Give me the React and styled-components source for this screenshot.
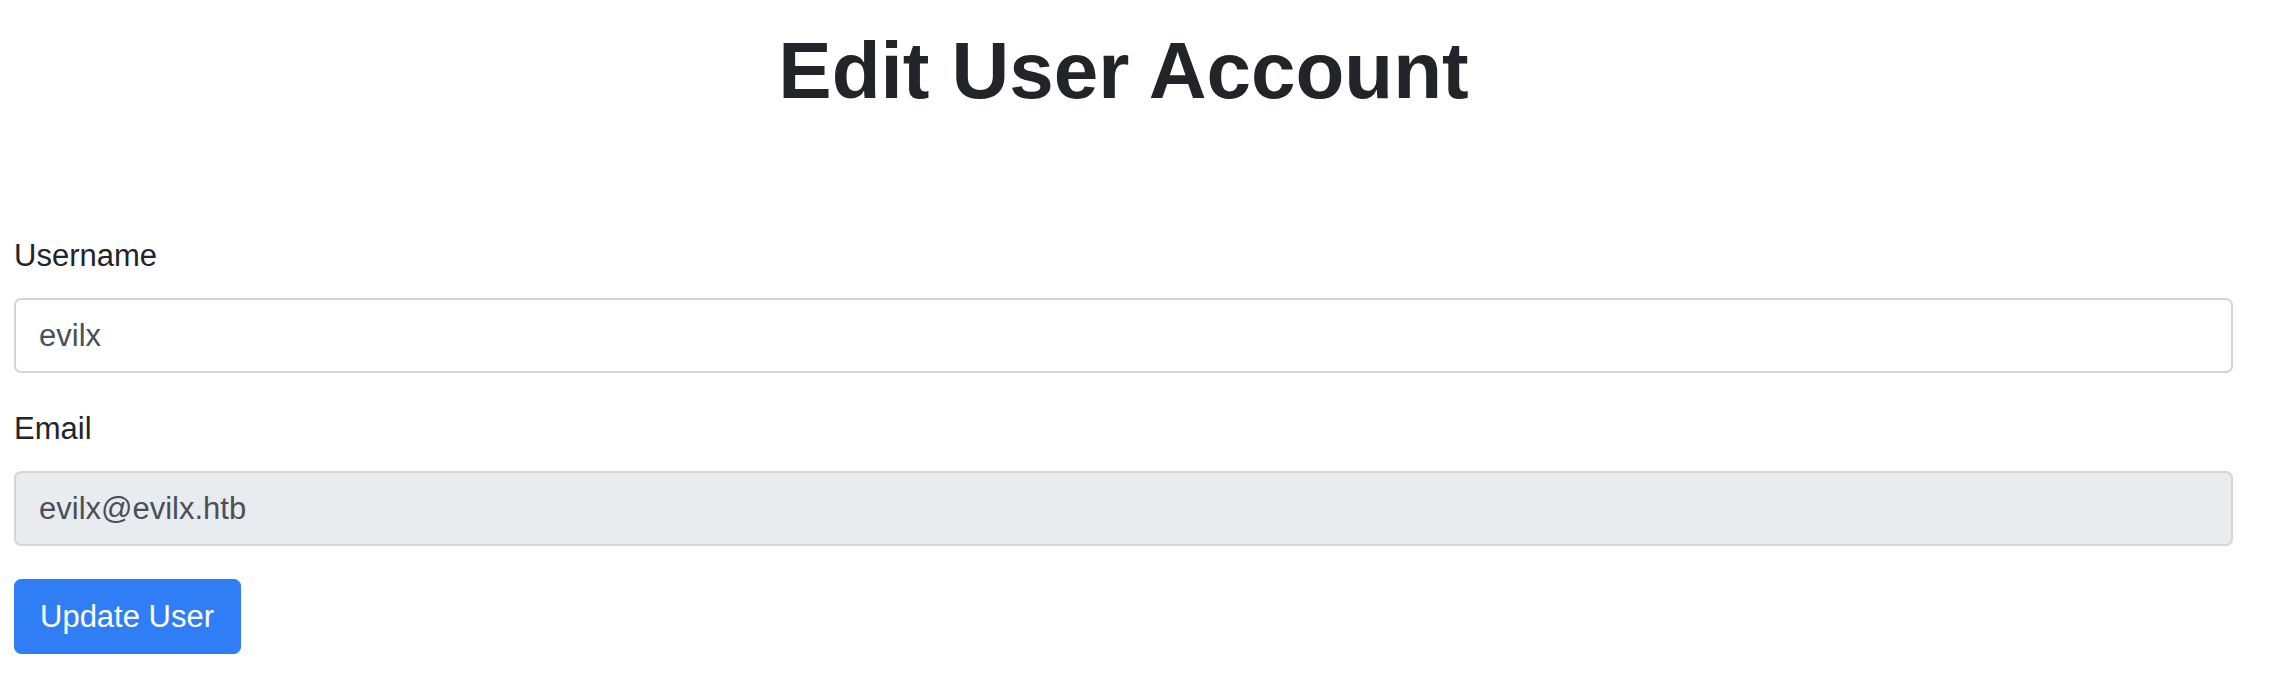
import React from 'react'
import styled, { createGlobalStyle } from 'styled-components'

const GlobalStyle = createGlobalStyle`
  html, body {
    margin: 0;
    padding: 0;
    background: #ffffff;
  }
  body {
    font-family: "Liberation Sans", Arial, sans-serif;
    color: #212529;
  }
`;

const Page = styled.div`
  display: flex;
  flex-direction: column;
  padding: 23px 39px 0 14px;
`;

const Title = styled.h1`
  margin: 0 0 114px 0;
  font-size: 80px;
  line-height: 96px;
  font-weight: 700;
  text-align: center;
  color: #212529;
`;

const Form = styled.form`
  display: flex;
  flex-direction: column;
  align-items: stretch;
`;

const FieldGroup = styled.div`
  display: flex;
  flex-direction: column;
  margin-bottom: 33px;
`;

const Label = styled.label`
  font-size: 31px;
  line-height: 46px;
  margin-bottom: 19px;
  color: #212529;
`;

const Input = styled.input`
  box-sizing: border-box;
  height: 75px;
  width: 100%;
  padding: 0 23px;
  font-family: "Liberation Sans", Arial, sans-serif;
  font-size: 31px;
  color: #495057;
  background: ${p => (p.disabled ? '#e9ecef' : '#ffffff')};
  border: 2px solid #d1d5da;
  border-radius: 7px;
  outline: none;
  -webkit-text-fill-color: #495057;
  opacity: 1;
`;

const Button = styled.button`
  align-self: flex-start;
  box-sizing: border-box;
  height: 75px;
  padding: 0 26px 0 25px;
  font-family: "Liberation Sans", Arial, sans-serif;
  font-size: 31px;
  color: #ffffff;
  background: #307ef6;
  border: 1px solid #307ef6;
  border-radius: 7px;
  cursor: pointer;
`;

function App() {
  return (
    <>
      <GlobalStyle />
      <Page>
        <Title>Edit User Account</Title>
        <Form onSubmit={e => e.preventDefault()}>
          <FieldGroup>
            <Label htmlFor="username">Username</Label>
            <Input id="username" defaultValue="evilx" />
          </FieldGroup>
          <FieldGroup>
            <Label htmlFor="email">Email</Label>
            <Input id="email" defaultValue="evilx@evilx.htb" disabled />
          </FieldGroup>
          <Button type="submit">Update User</Button>
        </Form>
      </Page>
    </>
  )
}

export default App
